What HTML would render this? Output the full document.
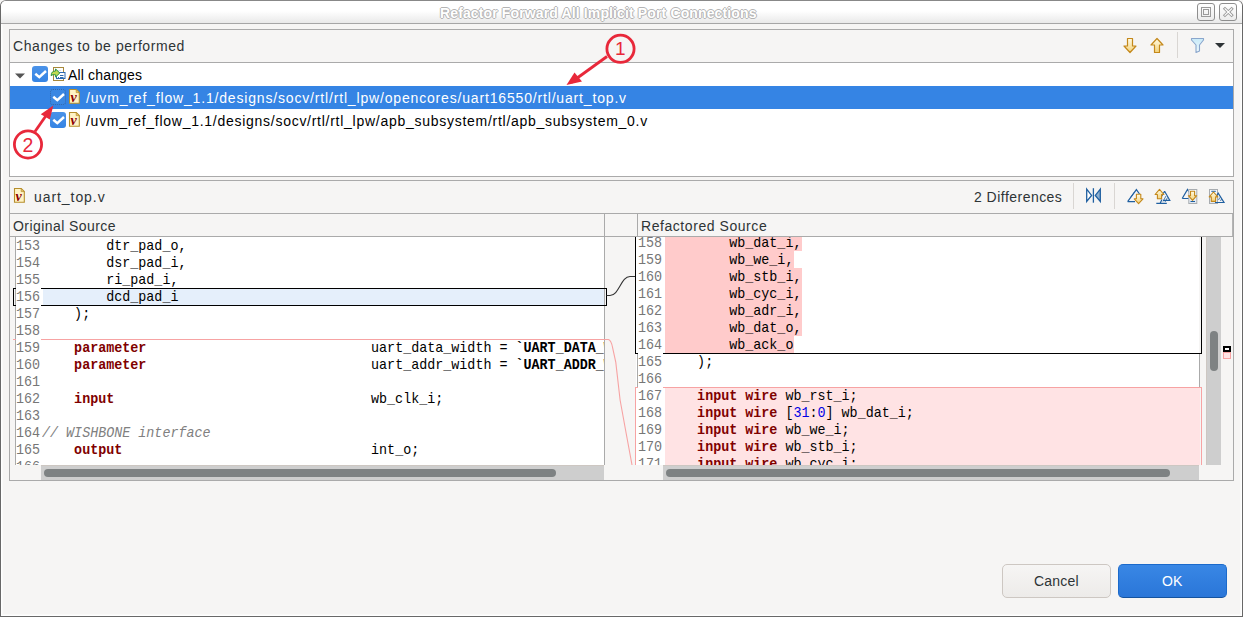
<!DOCTYPE html>
<html><head><meta charset="utf-8">
<style>
*{box-sizing:border-box;margin:0;padding:0}
html,body{width:1243px;height:617px;overflow:hidden;background:#f6f5f4}
body{position:relative;font-family:"Liberation Sans",sans-serif;font-size:14px;color:#2e3436}
.a{position:absolute}
.t{position:absolute;white-space:pre;line-height:16px;height:16px}
.mono{font-family:"Liberation Mono",monospace;font-size:14.4px;line-height:17px;white-space:pre;transform:scaleX(0.9293);transform-origin:0 0}
.kw{color:#7f0000;font-weight:bold}
.num{color:#0000e6}
.cm{color:#808080;font-style:italic}
.ln{position:absolute;text-align:right;color:#767676;font-family:"Liberation Mono",monospace;font-size:14.4px;line-height:17px;white-space:pre;transform:scaleX(0.9293);transform-origin:0 0}
</style></head><body>

<!-- window frame -->
<div class="a" style="left:0;top:0;width:1243px;height:617px;border:1px solid #686868;border-top-color:#888;border-radius:6px 6px 0 0"></div>
<div class="a" style="left:1px;top:24px;width:1241px;height:592px;border:1px solid #fff;border-top:none"></div>
<div class="a" style="left:2px;top:24px;width:1239px;height:591px;border:1px solid #fafaf9;border-top:none"></div>
<!-- title bar -->
<div class="a" style="left:1px;top:1px;width:1241px;height:22px;border-radius:5px 5px 0 0;background:linear-gradient(#ffffff 0px,#ffffff 10px,#e9e9e9 22px)"></div>
<div class="a" style="left:1px;top:23px;width:1241px;height:1px;background:#a6a6a6"></div>
<div class="t" style="left:440px;top:5px;font-weight:bold;color:#fff;letter-spacing:0.13px;text-shadow:1px 0 0 #b4b4b4,-1px 0 0 #b4b4b4,0 1px 0 #b4b4b4,0 -1px 0 #b4b4b4">Refactor Forward All Implicit Port Connections</div>
<!-- title buttons -->
<div class="a" style="left:1197px;top:3px;width:18px;height:18px;border:1px solid #8e8e8e;border-radius:3px;background:linear-gradient(#fff,#ececec)"></div>
<div class="a" style="left:1201px;top:7px;width:10px;height:10px;border:1px solid #9a9a9a"></div>
<div class="a" style="left:1203px;top:9px;width:6px;height:6px;border:1px solid #9a9a9a"></div>
<div class="a" style="left:1219px;top:3px;width:18px;height:18px;border:1px solid #8e8e8e;border-radius:3px;background:linear-gradient(#fff,#ececec)"></div>
<svg class="a" style="left:1219px;top:3px" width="18" height="18"><path d="M6 5.8 L12.6 12.2 M12.6 5.8 L6 12.2" stroke="#9a9a9a" stroke-width="3" stroke-linecap="square"/><path d="M6 5.8 L12.6 12.2 M12.6 5.8 L6 12.2" stroke="#fff" stroke-width="1.2" stroke-linecap="square"/></svg>

<!-- ===== Group 1 ===== -->
<div class="a" style="left:9px;top:29px;width:1225px;height:148px;border:1px solid #aaaaaa"></div>
<div class="a" style="left:10px;top:62px;width:1223px;height:1px;background:#aaaaaa"></div>
<div class="a" style="left:10px;top:63px;width:1223px;height:113px;background:#fff"></div>
<div class="t" style="left:13px;top:38px;letter-spacing:0.57px">Changes to be performed</div>
<!-- toolbar icons -->
<svg class="a" style="left:1122px;top:37px" width="16" height="17"><path d="M5.5 1.5 H10.5 V9 H14 L8 15.5 L2 9 H5.5 Z" fill="url(#ag)" stroke="#c4881a" stroke-width="1.2" stroke-linejoin="round"/></svg>
<svg class="a" style="left:1149px;top:37px" width="16" height="17"><path d="M5.5 15.5 H10.5 V8 H14 L8 1.5 L2 8 H5.5 Z" fill="url(#ag)" stroke="#c4881a" stroke-width="1.2" stroke-linejoin="round"/></svg>
<div class="a" style="left:1177px;top:32px;width:1px;height:26px;background:#d9d6d3"></div>
<svg class="a" style="left:1190px;top:37px" width="16" height="17"><defs><linearGradient id="fg" x1="0" y1="0" x2="0" y2="1"><stop offset="0" stop-color="#c8eaf8"/><stop offset="1" stop-color="#eef8fc"/></linearGradient></defs><path d="M1.5 1.5 H13.5 V3 L9.5 8 V14 L6 15.5 V8 L1.5 3 Z" fill="url(#fg)" stroke="#8aa6cc" stroke-width="1.1" stroke-linejoin="round"/></svg>
<svg class="a" style="left:1214px;top:42px" width="12" height="7"><path d="M1 1 H11 L6 6 Z" fill="#2e3436"/></svg>

<!-- tree -->
<svg class="a" style="left:14px;top:72px" width="12" height="8"><path d="M1 1.5 H11 L6 6.5 Z" fill="#555"/></svg>
<div class="a" style="left:32px;top:66px;width:16px;height:16px;border-radius:3px;background:linear-gradient(#4a92e8,#3584e4)"></div>
<svg class="a" style="left:32px;top:66px" width="16" height="16"><path d="M3.3 7.8 L7.3 11.2 L14 5" fill="none" stroke="#fff" stroke-width="2.5" stroke-linecap="butt"/></svg>
<svg class="a" style="left:50px;top:66px" width="17" height="16"><rect x="3.5" y="1.5" width="10" height="13" fill="#fdfdfd" stroke="#a8883a"/><path d="M6 4.5 H11 M6 13 H8" stroke="#d8e0ea" stroke-width="1"/><rect x="6.5" y="6.5" width="8.5" height="6" fill="#fff" stroke="#2e6ab0"/><path d="M10 9.5 H13.5 M10 11.5 H13.5 M8 11.5 H9" stroke="#2e6ab0" stroke-width="1"/><path d="M9.8 7 L5.6 3 V5 C3 5 1 6.3 1.2 9.8 C2.3 8.4 3.5 8.6 5.6 8.8 V11 Z" fill="#c2d850" stroke="#2a9444" stroke-width="1" stroke-linejoin="round"/></svg>
<div class="t" style="left:68px;top:67px;color:#000;letter-spacing:0.16px">All changes</div>

<div class="a" style="left:10px;top:86px;width:1223px;height:23px;background:#3584e4"></div>
<div class="a" style="left:50px;top:89px;width:16px;height:16px;border-radius:3px;background:#3a87e2;border:1px dotted #3366a8"></div>
<svg class="a" style="left:50px;top:89px" width="16" height="16"><path d="M3.3 7.8 L7.3 11.2 L14 5" fill="none" stroke="#fff" stroke-width="2.5" stroke-linecap="butt"/></svg>
<svg class="a" style="left:68px;top:88px" width="14" height="17"><path d="M1.5 1.5 H8.2 L11.3 4.6 V15.3 H1.5 Z" fill="#fff3c6" stroke="#b68e2c" stroke-width="1.1"/><path d="M8.2 1.5 V4.6 H11.3 Z" fill="#e8c870" stroke="#b68e2c" stroke-width="0.7"/><text x="2.6" y="14.2" font-family="Liberation Serif" font-style="italic" font-weight="bold" font-size="14" fill="#8c0000">v</text></svg>
<div class="t" style="left:86px;top:90px;color:#fff;letter-spacing:0.83px">/uvm_ref_flow_1.1/designs/socv/rtl/rtl_lpw/opencores/uart16550/rtl/uart_top.v</div>

<div class="a" style="left:50px;top:112px;width:16px;height:16px;border-radius:3px;background:linear-gradient(#4a92e8,#3584e4)"></div>
<svg class="a" style="left:50px;top:112px" width="16" height="16"><path d="M3.3 7.8 L7.3 11.2 L14 5" fill="none" stroke="#fff" stroke-width="2.5" stroke-linecap="butt"/></svg>
<svg class="a" style="left:68px;top:111px" width="14" height="17"><path d="M1.5 1.5 H8.2 L11.3 4.6 V15.3 H1.5 Z" fill="#fff3c6" stroke="#b68e2c" stroke-width="1.1"/><path d="M8.2 1.5 V4.6 H11.3 Z" fill="#e8c870" stroke="#b68e2c" stroke-width="0.7"/><text x="2.6" y="14.2" font-family="Liberation Serif" font-style="italic" font-weight="bold" font-size="14" fill="#8c0000">v</text></svg>
<div class="t" style="left:86px;top:113px;color:#000;letter-spacing:0.73px">/uvm_ref_flow_1.1/designs/socv/rtl/rtl_lpw/apb_subsystem/rtl/apb_subsystem_0.v</div>

<!-- ===== Group 2 ===== -->
<div class="a" style="left:9px;top:180px;width:1225px;height:301px;border:1px solid #aaaaaa"></div>
<div class="a" style="left:10px;top:213px;width:1223px;height:1px;background:#aaaaaa"></div>
<svg class="a" style="left:13px;top:187px" width="14" height="17"><path d="M1.5 1.5 H8.2 L11.3 4.6 V15.3 H1.5 Z" fill="#fff3c6" stroke="#b68e2c" stroke-width="1.1"/><path d="M8.2 1.5 V4.6 H11.3 Z" fill="#e8c870" stroke="#b68e2c" stroke-width="0.7"/><text x="2.6" y="14.2" font-family="Liberation Serif" font-style="italic" font-weight="bold" font-size="14" fill="#8c0000">v</text></svg>
<div class="t" style="left:34px;top:189px;letter-spacing:0.93px">uart_top.v</div>
<div class="t" style="left:974px;top:189px;letter-spacing:0.47px">2 Differences</div>
<div class="a" style="left:1073px;top:183px;width:1px;height:26px;background:#d9d6d3"></div>
<div class="a" style="left:1114px;top:183px;width:1px;height:26px;background:#d9d6d3"></div>

<!-- pane headers -->
<div class="a" style="left:10px;top:236px;width:1223px;height:1px;background:#aaaaaa"></div>
<div class="t" style="left:13px;top:218px;letter-spacing:0.43px">Original Source</div>
<div class="t" style="left:641px;top:218px;letter-spacing:0.56px">Refactored Source</div>
<div class="a" style="left:604px;top:214px;width:1px;height:251px;background:#aaaaaa"></div>
<div class="a" style="left:637px;top:214px;width:1px;height:251px;background:#aaaaaa"></div>
<div class="a" style="left:1232px;top:214px;width:1px;height:22px;background:#b4b4b4"></div>

<div class="a" style="left:10px;top:237px;width:594px;height:228px;overflow:hidden">
<div class="a" style="left:5px;top:0;width:1px;height:228px;background:#aaaaaa"></div>
<div class="a" style="left:6px;top:0;width:25px;height:228px;background:#fff"></div>
<div class="a" style="left:31px;top:0;width:563px;height:228px;background:#fff"></div>
<div class="a" style="left:33px;top:52px;width:561px;height:16px;background:#e5effb"></div>
<div class="a" style="left:31px;top:51px;width:563px;height:1px;background:#000"></div>
<div class="a" style="left:31px;top:68px;width:563px;height:1px;background:#000"></div>
<div class="a" style="left:31px;top:102px;width:563px;height:1px;background:#f7a3a3"></div>
<div class="ln" style="left:5.8px;top:1px">153</div>
<div class="a mono" style="left:32px;top:1px;color:#000">        dtr_pad_o,</div>
<div class="ln" style="left:5.8px;top:18px">154</div>
<div class="a mono" style="left:32px;top:18px;color:#000">        dsr_pad_i,</div>
<div class="ln" style="left:5.8px;top:35px">155</div>
<div class="a mono" style="left:32px;top:35px;color:#000">        ri_pad_i,</div>
<div class="ln" style="left:5.8px;top:52px">156</div>
<div class="a mono" style="left:32px;top:52px;color:#000">        dcd_pad_i</div>
<div class="ln" style="left:5.8px;top:69px">157</div>
<div class="a mono" style="left:32px;top:69px;color:#000">    );</div>
<div class="ln" style="left:5.8px;top:86px">158</div>
<div class="a mono" style="left:32px;top:86px;color:#000"></div>
<div class="ln" style="left:5.8px;top:103px">159</div>
<div class="a mono" style="left:32px;top:103px;color:#000">    <span class="kw">parameter</span>                            uart_data_width = <b style="color:#000">`UART_DATA_WIDTH</b>;</div>
<div class="ln" style="left:5.8px;top:120px">160</div>
<div class="a mono" style="left:32px;top:120px;color:#000">    <span class="kw">parameter</span>                            uart_addr_width = <b style="color:#000">`UART_ADDR_WIDTH</b>;</div>
<div class="ln" style="left:5.8px;top:137px">161</div>
<div class="a mono" style="left:32px;top:137px;color:#000"></div>
<div class="ln" style="left:5.8px;top:154px">162</div>
<div class="a mono" style="left:32px;top:154px;color:#000">    <span class="kw">input</span>                                wb_clk_i;</div>
<div class="ln" style="left:5.8px;top:171px">163</div>
<div class="a mono" style="left:32px;top:171px;color:#000"></div>
<div class="ln" style="left:5.8px;top:188px">164</div>
<div class="a mono" style="left:32px;top:188px;color:#000"><span class="cm">// WISHBONE interface</span></div>
<div class="ln" style="left:5.8px;top:205px">165</div>
<div class="a mono" style="left:32px;top:205px;color:#000">    <span class="kw">output</span>                               int_o;</div>
<div class="ln" style="left:5.8px;top:222px">166</div>
<div class="a mono" style="left:32px;top:222px;color:#000"></div>
</div>
<div class="a" style="left:13px;top:288px;width:3px;height:18px;border:1px solid #000;border-right:none"></div>
<div class="a" style="left:604px;top:288px;width:3px;height:18px;border:1px solid #000;border-left:none"></div>
<div class="a" style="left:13px;top:339px;width:3px;height:1px;background:#f7a3a3"></div>
<div class="a" style="left:635px;top:237px;width:567px;height:228px;overflow:hidden">
<div class="a" style="left:1px;top:0;width:563px;height:228px;background:#fff"></div>
<div class="a" style="left:2px;top:117px;width:1px;height:33px;background:#aaaaaa"></div>
<div class="a" style="left:564px;top:117px;width:1px;height:33px;background:#aaaaaa"></div>
<div class="a" style="left:30px;top:151px;width:535px;height:78px;background:#ffe3e4"></div>
<div class="a" style="left:30px;top:-3px;width:136.5px;height:17px;background:#ffcbcb"></div>
<div class="a" style="left:30px;top:14px;width:128.5px;height:17px;background:#ffcbcb"></div>
<div class="a" style="left:30px;top:31px;width:136.5px;height:17px;background:#ffcbcb"></div>
<div class="a" style="left:30px;top:48px;width:136.5px;height:17px;background:#ffcbcb"></div>
<div class="a" style="left:30px;top:65px;width:136.5px;height:17px;background:#ffcbcb"></div>
<div class="a" style="left:30px;top:82px;width:136.5px;height:17px;background:#ffcbcb"></div>
<div class="a" style="left:30px;top:99px;width:128.5px;height:17px;background:#ffcbcb"></div>
<div class="a" style="left:0;top:0;width:1px;height:117px;background:#000"></div>
<div class="a" style="left:566px;top:0;width:1px;height:117px;background:#000"></div>
<div class="a" style="left:0;top:116px;width:567px;height:1px;background:#000"></div>
<div class="a" style="left:0;top:150px;width:1px;height:78px;background:#f7a3a3"></div>
<div class="a" style="left:566px;top:150px;width:1px;height:78px;background:#f7a3a3"></div>
<div class="a" style="left:0;top:150px;width:567px;height:1px;background:#f7a3a3"></div>
<div class="a" style="left:3px;top:0;width:25px;height:228px;background:#fff"></div>
<div class="ln" style="left:2.8px;top:-2px">158</div>
<div class="a mono" style="left:30px;top:-2px;color:#000">        wb_dat_i,</div>
<div class="ln" style="left:2.8px;top:15px">159</div>
<div class="a mono" style="left:30px;top:15px;color:#000">        wb_we_i,</div>
<div class="ln" style="left:2.8px;top:32px">160</div>
<div class="a mono" style="left:30px;top:32px;color:#000">        wb_stb_i,</div>
<div class="ln" style="left:2.8px;top:49px">161</div>
<div class="a mono" style="left:30px;top:49px;color:#000">        wb_cyc_i,</div>
<div class="ln" style="left:2.8px;top:66px">162</div>
<div class="a mono" style="left:30px;top:66px;color:#000">        wb_adr_i,</div>
<div class="ln" style="left:2.8px;top:83px">163</div>
<div class="a mono" style="left:30px;top:83px;color:#000">        wb_dat_o,</div>
<div class="ln" style="left:2.8px;top:100px">164</div>
<div class="a mono" style="left:30px;top:100px;color:#000">        wb_ack_o</div>
<div class="ln" style="left:2.8px;top:117px">165</div>
<div class="a mono" style="left:30px;top:117px;color:#000">    );</div>
<div class="ln" style="left:2.8px;top:134px">166</div>
<div class="a mono" style="left:30px;top:134px;color:#000"></div>
<div class="ln" style="left:2.8px;top:151px">167</div>
<div class="a mono" style="left:30px;top:151px;color:#000">    <span class="kw">input wire</span> wb_rst_i;</div>
<div class="ln" style="left:2.8px;top:168px">168</div>
<div class="a mono" style="left:30px;top:168px;color:#000">    <span class="kw">input wire</span> [<span class="num">31</span>:<span class="num">0</span>] wb_dat_i;</div>
<div class="ln" style="left:2.8px;top:185px">169</div>
<div class="a mono" style="left:30px;top:185px;color:#000">    <span class="kw">input wire</span> wb_we_i;</div>
<div class="ln" style="left:2.8px;top:202px">170</div>
<div class="a mono" style="left:30px;top:202px;color:#000">    <span class="kw">input wire</span> wb_stb_i;</div>
<div class="ln" style="left:2.8px;top:219px">171</div>
<div class="a mono" style="left:30px;top:219px;color:#000">    <span class="kw">input wire</span> wb_cyc_i;</div>
</div>

<!-- center curves -->
<svg class="a" style="left:604px;top:237px" width="34" height="228" viewBox="604 237 34 228">
<path d="M606.5 295.5 L610 295.5 C619 295.5 621 276.5 630 276.5 L635 276.5" fill="none" stroke="#333" stroke-width="1.1"/>
<path d="M604 339.5 L608.4 339.5 C610.5 340 611.8 343.5 612.6 347.6 L615.8 362.4 L620.1 400 L626.1 433 L631.9 464.4 L632.5 468" fill="none" stroke="#f7a3a3" stroke-width="1.1"/>
</svg>
<!-- left h scrollbar -->
<div class="a" style="left:41px;top:465px;width:563px;height:15px;background:#cecece;border-top:1px solid #cdc7c2"></div>
<div class="a" style="left:44px;top:469px;width:512px;height:8px;border-radius:4px;background:#7e8283"></div>
<!-- right h scrollbar -->
<div class="a" style="left:663px;top:465px;width:536px;height:15px;background:#cecece;border-top:1px solid #cdc7c2"></div>
<div class="a" style="left:666px;top:469px;width:504px;height:8px;border-radius:4px;background:#7e8283"></div>
<!-- right v scrollbar -->
<div class="a" style="left:1206px;top:237px;width:15px;height:228px;background:#cecece;border-left:1px solid #cdc7c2"></div>
<div class="a" style="left:1210px;top:331px;width:8px;height:40px;border-radius:4px;background:#7e8283"></div>
<!-- overview markers -->
<div class="a" style="left:1223px;top:346px;width:8px;height:6px;border:2px solid #000;background:#fff"></div>
<div class="a" style="left:1223px;top:352px;width:8px;height:7px;border:1px solid #f7a3a3;background:#ffe3e4"></div>

<!-- buttons -->
<div class="a" style="left:1002px;top:564px;width:109px;height:34px;border:1px solid #cdc7c2;border-radius:5px;background:linear-gradient(#f6f5f4,#edebe9)"></div>
<div class="t" style="left:1034px;top:573px;letter-spacing:0.2px">Cancel</div>
<div class="a" style="left:1118px;top:564px;width:109px;height:34px;border:1px solid #1b6acb;border-bottom-color:#15539e;border-radius:5px;background:linear-gradient(#3987e5,#2a76d8)"></div>
<div class="t" style="left:1162px;top:573px;color:#fff">OK</div>


<!-- compare toolbar icons -->
<svg class="a" style="left:1080px;top:184px" width="150" height="24" viewBox="1080 184 150 24">
<defs><linearGradient id="ag" x1="0" y1="0" x2="0" y2="1"><stop offset="0" stop-color="#fffbe6"/><stop offset="1" stop-color="#f3d27a"/></linearGradient>
<linearGradient id="dg" x1="0" y1="0" x2="0" y2="1"><stop offset="0" stop-color="#f8fbfe"/><stop offset="1" stop-color="#dfe8f4"/></linearGradient></defs>
<g stroke="#1f5fa0" stroke-width="1.3" stroke-linejoin="miter">
<path d="M1086.7 189.2 L1091.6 195.4 L1086.7 201.5 Z" fill="#fff"/>
<path d="M1093.4 188.2 V202.7" fill="none"/>
<path d="M1100.3 189.2 L1095.3 195.4 L1100.3 201.5 Z" fill="#8fb0d0"/>
</g>
<!-- icon1 -->
<g stroke="#1f5fa0" stroke-width="1.2" fill="none">
<path d="M1127.6 201.6 L1136.4 189.6 L1139.5 194 M1127.6 201.6 H1135"/>
<path d="M1130.5 197.5 L1134.5 192" stroke-width="0.8"/>
</g>
<path d="M1136.4 194.3 H1140.8 V198.8 H1143 L1138.6 203.6 L1134.2 198.8 H1136.4 Z" fill="url(#ag)" stroke="#c4881a" stroke-width="1.1" stroke-linejoin="round"/>
<!-- icon2 -->
<g stroke="#1f5fa0" stroke-width="1.2" fill="none">
<path d="M1156.3 203.4 H1166.8 M1164.6 191.2 L1169.8 200.3 H1163 M1164.6 191.2 L1160 199 M1160 203.4 L1162 199.5"/>
<path d="M1163 201.5 L1166 196 M1165 202 L1167.5 197.5" stroke-width="0.8"/>
</g>
<path d="M1157.4 198.8 H1161.6 V194.5 H1163.9 L1159.5 189.3 L1155.1 194.5 H1157.4 Z" fill="url(#ag)" stroke="#c4881a" stroke-width="1.1" stroke-linejoin="round"/>
<!-- icon3 -->
<g stroke="#1f5fa0" stroke-width="1.2" fill="none"><path d="M1182.2 198.5 H1189 M1182.2 198.5 L1187.5 189.5 L1189 192"/></g>
<rect x="1188.8" y="189.5" width="8" height="14" fill="url(#dg)" stroke="#a8acb0" stroke-width="1"/>
<path d="M1190.5 201.5 H1195" stroke="#1f5fa0" stroke-width="1"/>
<path d="M1190.5 191.3 H1194.6 V195.7 H1196.7 L1192.55 200.4 L1188.4 195.7 H1190.5 Z" fill="url(#ag)" stroke="#c4881a" stroke-width="1.1" stroke-linejoin="round"/>
<!-- icon4 -->
<rect x="1209.5" y="189.5" width="8" height="14" fill="url(#dg)" stroke="#a8acb0" stroke-width="1"/>
<path d="M1211.3 191.3 H1215.8" stroke="#1f5fa0" stroke-width="1"/>
<g stroke="#1f5fa0" stroke-width="1.2" fill="none"><path d="M1215 202.5 H1224 L1218.2 193.2 L1216.5 196"/><path d="M1218.5 200 L1219.8 197.5 M1220.5 201 L1221.5 199" stroke-width="0.8"/></g>
<path d="M1211.3 201.4 H1215.6 V196.9 H1217.8 L1213.5 192 L1209.2 196.9 H1211.3 Z" fill="url(#ag)" stroke="#c4881a" stroke-width="1.1" stroke-linejoin="round"/>
</svg>
<!-- annotations -->
<svg class="a" style="left:0;top:0" width="1243" height="617">
<g stroke="#e8283a" stroke-width="2.8" fill="none">
<circle cx="620.5" cy="48.8" r="13.6"/>
<circle cx="28" cy="144.5" r="13.6"/>
<path d="M607 56.5 L571 82.5"/>
<path d="M35 131.5 L51 108.5"/>
</g>
<path d="M566.5 85 L574.5 72.5 L582 81.5 Z" fill="#e8283a"/>
<path d="M53.3 105.5 L40.8 114.3 L49.8 119.6 Z" fill="#e8283a"/>
<text x="620.3" y="55" text-anchor="middle" font-family="Liberation Sans" font-size="19" fill="#e8283a">1</text>
<text x="28" y="151.9" text-anchor="middle" font-family="Liberation Sans" font-size="19.5" fill="#e8283a">2</text>
</svg>

</body></html>
